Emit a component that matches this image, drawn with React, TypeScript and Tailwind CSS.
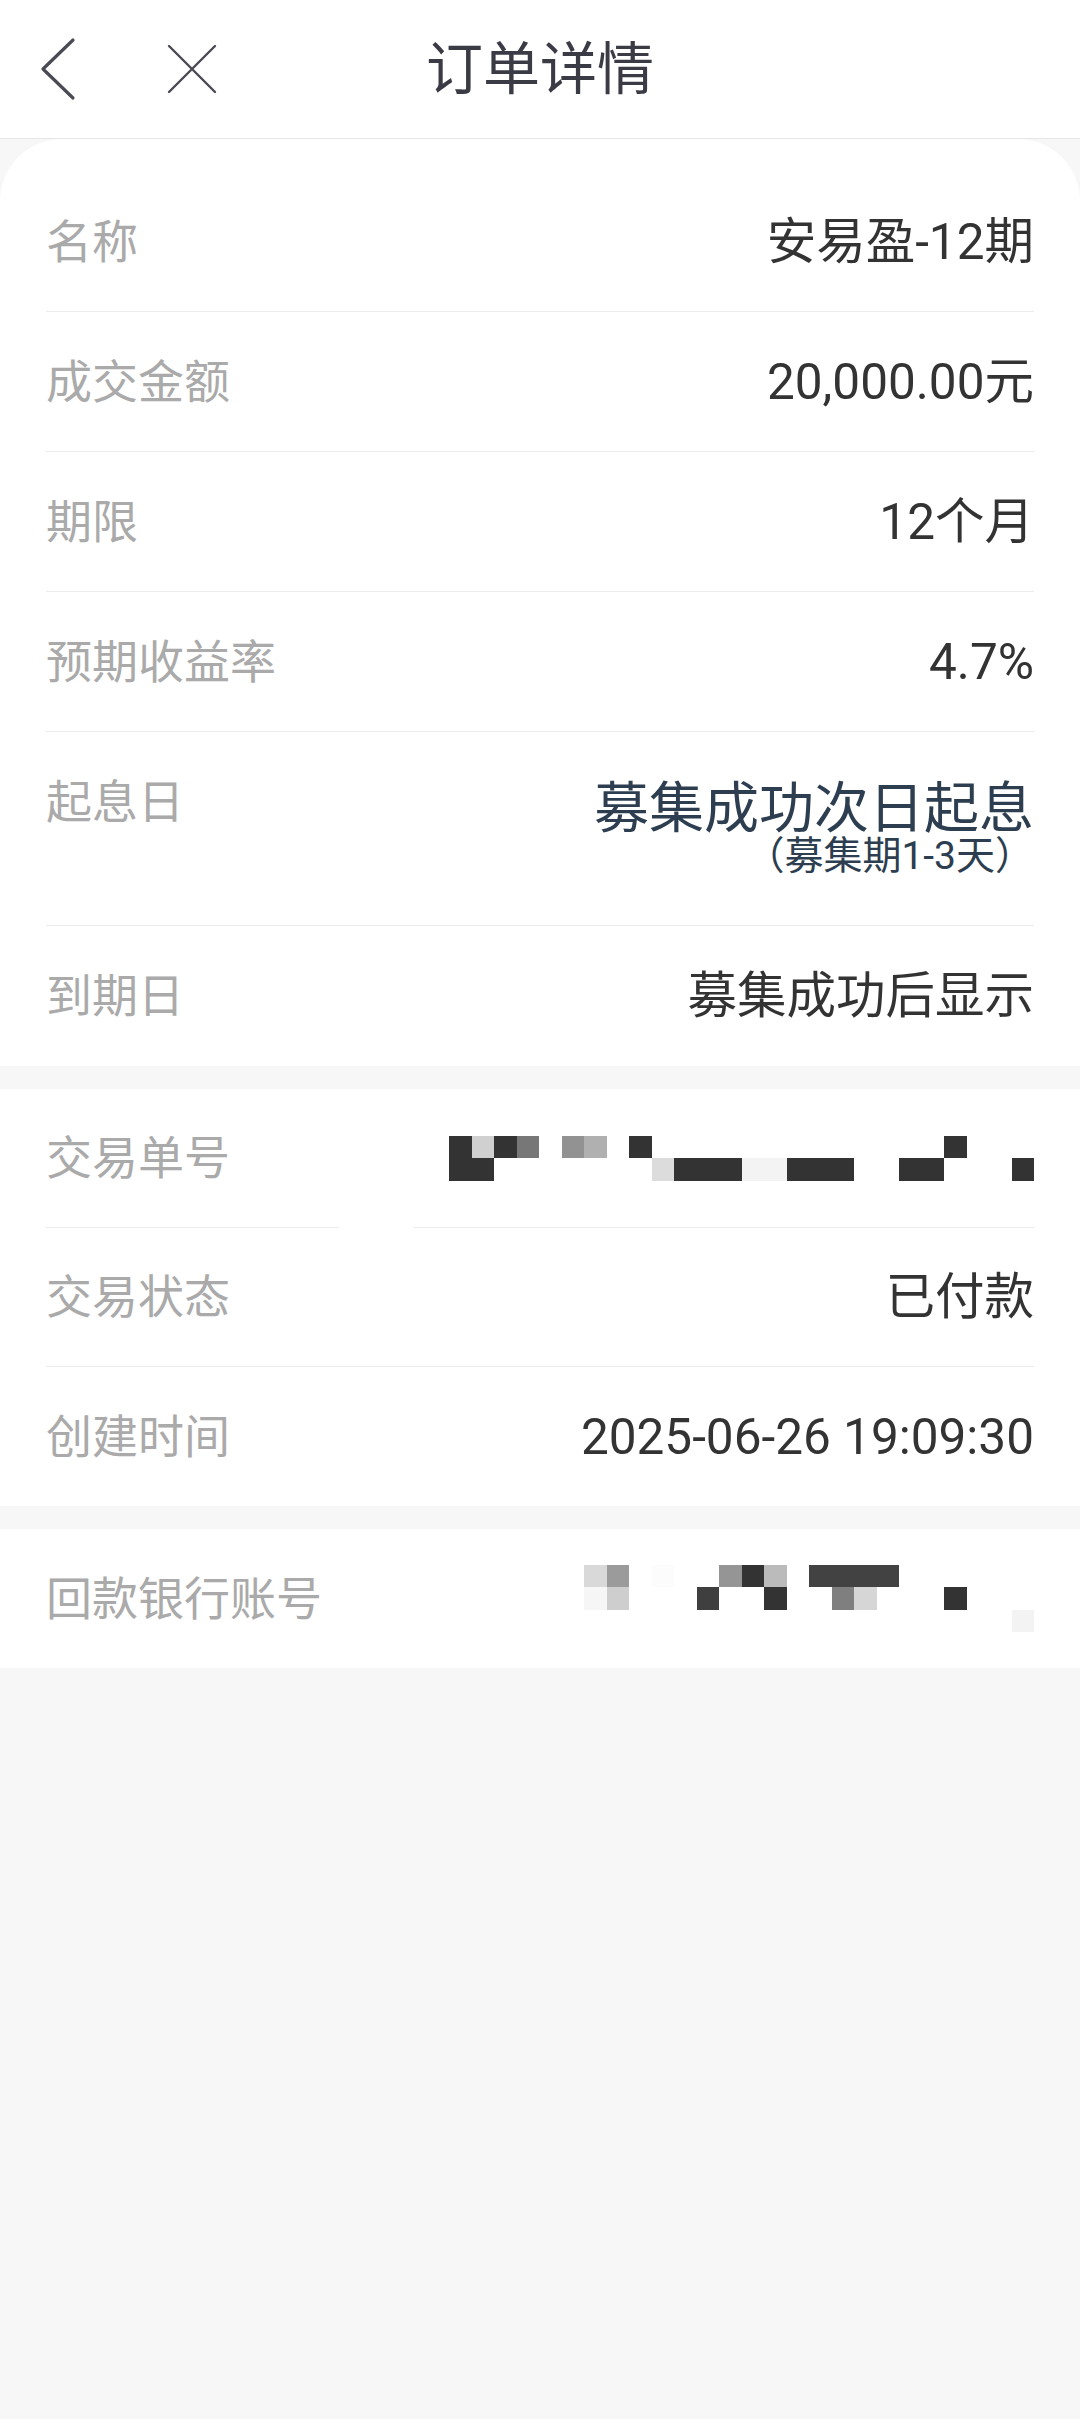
import React from "react";

const D = "bg-[#333333]";

// mosaic rows for the masked numbers, 26 cells each, null = blank
const tradeNoMosaic: (string | null)[][] = [
	[D, "bg-[#d0d0d0]", D, "bg-[#777777]", null, "bg-[#929292]", "bg-[#b0b0b0]", null, D, null, null, null, null, null, null, null, null, null, null, null, null, null, D, null, null, null],
	[D, D, null, null, null, null, null, null, null, "bg-[#dcdcdc]", D, D, D, "bg-[#f3f3f3]", "bg-[#f3f3f3]", D, D, D, null, null, D, D, null, null, null, D],
];

const bankMosaic: (string | null)[][] = [
	[null, null, null, null, null, null, "bg-[#d9d9d9]", "bg-[#9b9b9b]", null, "bg-[#fcfcfc]", null, null, "bg-[#959595]", D, "bg-[#bbbbbb]", null, "bg-[#424242]", "bg-[#424242]", "bg-[#424242]", "bg-[#424242]", null, null, null, null, null, null],
	[null, null, null, null, null, null, "bg-[#f6f6f6]", "bg-[#cecece]", null, null, null, "bg-[#3f3f3f]", null, null, D, null, null, "bg-[#7f7f7f]", "bg-[#d6d6d6]", null, null, null, D, null, null, null],
	[null, null, null, null, null, null, null, null, null, null, null, null, null, null, null, null, null, null, null, null, null, null, null, null, null, "bg-[#f3f3f3]"],
];

function Mosaic({ rows }: { rows: (string | null)[][] }) {
	return (
		<div className="flex flex-col">
			{rows.map((row, r) => (
				<div key={r} className="flex">
					{row.map((cell, c) => (
						<div key={c} className={`w-[22.5px] h-[22.5px] ${cell ?? ""}`} />
					))}
				</div>
			))}
		</div>
	);
}

function Row({ label, value, last = false, tall = true }: { label: string; value: React.ReactNode; last?: boolean; tall?: boolean }) {
	return (
		<div className={`flex items-center justify-between ${tall ? "h-[140px]" : "h-[139px]"} ${last ? "" : "border-b border-[#ececec]"}`}>
			<span className="text-[46px] leading-[62px] text-[#aaaaaa]">{label}</span>
			<span className="text-[49.5px] leading-[62px] text-[#333333]">{value}</span>
		</div>
	);
}

export default function App() {
	return (
		<div className="min-h-[2419px] bg-[#f7f7f7] font-['Roboto','Noto_Sans_CJK_SC',sans-serif]">
			{/* header */}
			<div className="grid grid-cols-[1fr_auto_1fr] items-center h-[139px] bg-white border-b border-[#e6e6e6]">
				<div className="flex items-center pl-[40px]">
					<svg width="36" height="64" viewBox="0 0 36 64" fill="none">
						<path d="M33 3 L3 32 L33 61" stroke="#4a4a55" strokeWidth="3.2" strokeLinecap="round" strokeLinejoin="round" />
					</svg>
					<svg className="ml-[91px]" width="50" height="50" viewBox="0 0 50 50" fill="none">
						<path d="M2 2 L48 48 M48 2 L2 48" stroke="#4a4a55" strokeWidth="2.4" strokeLinecap="round" />
					</svg>
				</div>
				<h1 className="text-[57px] leading-none text-[#3b3b46] font-normal">订单详情</h1>
				<div />
			</div>

			{/* product section */}
			<div className="bg-white rounded-t-[62px] pt-[33px] px-[46px]">
				<Row label="名称" value="安易盈-12期" />
				<Row label="成交金额" value="20,000.00元" />
				<Row label="期限" value="12个月" />
				<Row label="预期收益率" value="4.7%" />
				<div className="flex items-start justify-between h-[194px] border-b border-[#ececec]">
					<span className="pt-[39px] text-[46px] leading-[62px] text-[#aaaaaa]">起息日</span>
					<div className="pt-[48px] flex flex-col items-end text-[#2c3e50]">
						<span className="text-[55px] leading-[56px]">募集成功次日起息</span>
						<span className="text-[39px] leading-[40px]">（募集期1-3天）</span>
					</div>
				</div>
				<Row label="到期日" value="募集成功后显示" last />
			</div>

			{/* trade section */}
			<div className="mt-[23px] bg-white px-[46px]">
				<div className="flex items-center justify-between h-[138px]">
					<span className="text-[46px] leading-[62px] text-[#aaaaaa]">交易单号</span>
					<Mosaic rows={tradeNoMosaic} />
				</div>
				<div className="flex justify-between">
					<div className="w-[293px] h-px bg-[#ececec]" />
					<div className="w-[620px] h-px bg-[#ececec]" />
				</div>
				<Row label="交易状态" value="已付款" tall={false} />
				<Row label="创建时间" value="2025-06-26 19:09:30" tall={false} last />
			</div>

			{/* bank section */}
			<div className="mt-[23px] bg-white px-[46px]">
				<div className="flex items-center justify-between h-[139px]">
					<span className="text-[46px] leading-[62px] text-[#aaaaaa]">回款银行账号</span>
					<Mosaic rows={bankMosaic} />
				</div>
			</div>
		</div>
	);
}
